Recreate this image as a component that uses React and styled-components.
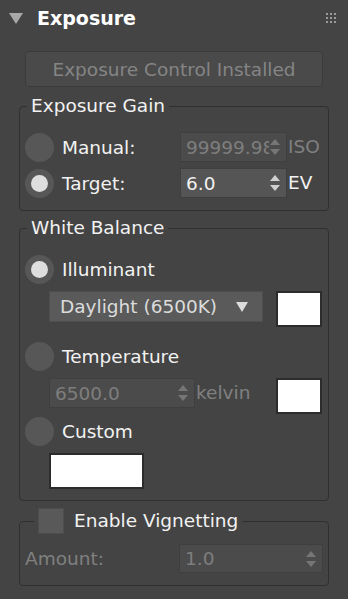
import React from "react";
import styled, { createGlobalStyle } from "styled-components";

const Global = createGlobalStyle`
  html, body { margin: 0; padding: 0; background: #444444; }
  body {
    font-family: "DejaVu Sans", "Liberation Sans", sans-serif;
    font-size: 18.5px;
    color: #f2f2f2;
    width: 348px;
    height: 599px;
    overflow: hidden;
  }
`;

const Panel = styled.div`
  width: 348px;
  height: 599px;
  background: #444444;
`;

const Header = styled.div`
  display: flex;
  align-items: center;
  height: 36px;
  padding: 0 12px 0 9px;
`;

const Caret = styled.span`
  width: 0;
  height: 0;
  border-left: 7px solid transparent;
  border-right: 7px solid transparent;
  border-top: 11px solid #a8a8a8;
  margin-right: 14px;
`;

const Title = styled.span`
  flex: 1;
  font-size: 19px;
  font-weight: 700;
  color: #ffffff;
`;

const Grip = styled.div`
  display: grid;
  grid-template-columns: repeat(3, 2px);
  grid-auto-rows: 2px;
  gap: 2px;
  margin-top: -1px;
  span { background: #9a9a9a; }
`;

const InstallButton = styled.button`
  display: block;
  box-sizing: border-box;
  width: 298px;
  height: 36px;
  margin: 15px 0 0 25px;
  background: #4a4a4a;
  border: 1px solid #3b3b3b;
  border-radius: 4px;
  color: #858585;
  font-family: inherit;
  font-size: 18.5px;
  padding: 0;
`;

const Group = styled.fieldset`
  box-sizing: border-box;
  width: 310px;
  margin: ${p => p.$top}px 0 0 19px;
  padding: ${p => p.$padTop}px 5px ${p => p.$padBottom}px 5px;
  border: 1px solid #303030;
  border-radius: 4px;
`;

const Legend = styled.legend`
  display: flex;
  align-items: center;
  gap: 10px;
  margin-left: ${p => p.$indent}px;
  padding: 0 4px;
  line-height: 22px;
  color: #f2f2f2;
`;

const Check = styled.span`
  box-sizing: border-box;
  width: 26px;
  height: 26px;
  background: #595959;
  border: 1px solid #4d4d4d;
`;

const Row = styled.div`
  display: grid;
  grid-template-columns: 37px 118px 107px auto;
  align-items: center;
  height: 36px;
`;

const RadioRow = styled.div`
  display: flex;
  align-items: center;
  height: 36px;
  margin-top: ${p => p.$top || 0}px;
`;

const Radio = styled.span`
  box-sizing: border-box;
  width: 29px;
  height: 29px;
  border-radius: 50%;
  background: #575757;
  display: flex;
  align-items: center;
  justify-content: center;
  margin-right: 8px;
  &::after {
    content: "";
    width: 17px;
    height: 17px;
    border-radius: 50%;
    background: ${p => (p.$on ? "#dedede" : "transparent")};
  }
`;

const Label = styled.span`
  color: ${p => (p.$dim ? "#808080" : "#f2f2f2")};
`;

const Spin = styled.div`
  box-sizing: border-box;
  display: flex;
  align-items: center;
  width: ${p => p.$w}px;
  height: ${p => p.$h || 30}px;
  background: ${p => (p.$dim ? "#4b4b4b" : "#555555")};
  border: 1px solid #3f3f3f;
  padding: 0 5px 0 5px;
  color: ${p => (p.$dim ? "#7e7e7e" : "#f2f2f2")};
  overflow: hidden;
  white-space: nowrap;
`;

const Value = styled.span`
  flex: 1;
  overflow: hidden;
  text-overflow: clip;
`;

const Arrows = ({ dim }) => (
  <svg width="12" height="18" viewBox="0 0 12 18" style={{ flex: "none" }}>
    <path d="M6 1 L11 7 L1 7 Z" fill={dim ? "#767676" : "#d0d0d0"} />
    <path d="M6 17 L11 11 L1 11 Z" fill={dim ? "#767676" : "#d0d0d0"} />
  </svg>
);

const Unit = styled.span`
  padding-left: 1px;
  line-height: 30px;
  color: ${p => (p.$dim ? "#808080" : "#f2f2f2")};
`;

const Indented = styled.div`
  display: flex;
  align-items: flex-start;
  height: ${p => p.$h}px;
  margin-top: ${p => p.$top || 0}px;
  padding: 0 1px 0 24px;
`;

const Dropdown = styled.div`
  box-sizing: border-box;
  display: flex;
  align-items: center;
  width: 214px;
  height: 31px;
  background: #5a5a5a;
  border: 1px solid #4e4e4e;
  padding: 0 14px 0 10px;
  color: #dcdcdc;
  span { flex: 1; }
`;

const DropArrow = styled.i`
  width: 0;
  height: 0;
  border-left: 6px solid transparent;
  border-right: 6px solid transparent;
  border-top: 10px solid #dcdcdc;
`;

const Swatch = styled.div`
  box-sizing: border-box;
  width: ${p => p.$w}px;
  height: 36px;
  margin-left: ${p => (p.$push ? "auto" : "0")};
  background: #ffffff;
  border: 2px solid #2c2c2c;
`;

const AmountRow = styled.div`
  display: flex;
  align-items: center;
  justify-content: space-between;
  height: 29px;
`;

export default function App() {
  return (
    <Panel>
      <Global />
      <Header>
        <Caret />
        <Title>Exposure</Title>
        <Grip>
          {Array.from({ length: 9 }).map((_, i) => <span key={i} />)}
        </Grip>
      </Header>

      <InstallButton disabled>Exposure Control Installed</InstallButton>

      <Group $top={8} $padTop={12} $padBottom={9}>
        <Legend $indent={2}>Exposure Gain</Legend>
        <Row>
          <Radio />
          <Label>Manual:</Label>
          <Spin $w={107} $dim>
            <Value>99999.98</Value>
            <Arrows dim />
          </Spin>
          <Unit $dim>ISO</Unit>
        </Row>
        <Row>
          <Radio $on />
          <Label>Target:</Label>
          <Spin $w={107}>
            <Value>6.0</Value>
            <Arrows />
          </Spin>
          <Unit>EV</Unit>
        </Row>
      </Group>

      <Group $top={6} $padTop={12} $padBottom={11}>
        <Legend $indent={2}>White Balance</Legend>
        <RadioRow>
          <Radio $on />
          <Label>Illuminant</Label>
        </RadioRow>
        <Indented $h={36} $top={4}>
          <Dropdown>
            <span>Daylight (6500K)</span>
            <DropArrow />
          </Dropdown>
          <Swatch $w={46} $push />
        </Indented>
        <RadioRow $top={11}>
          <Radio />
          <Label>Temperature</Label>
        </RadioRow>
        <Indented $h={36} $top={4}>
          <Spin $w={146} $dim>
            <Value>6500.0</Value>
            <Arrows dim />
          </Spin>
          <Unit $dim>kelvin</Unit>
          <Swatch $w={46} $push />
        </Indented>
        <RadioRow $top={-1}>
          <Radio />
          <Label>Custom</Label>
        </RadioRow>
        <Indented $h={36} $top={4}>
          <Swatch $w={95} />
        </Indented>
      </Group>

      <Group $top={7} $padTop={10} $padBottom={12}>
        <Legend $indent={9}>
          <Check />
          Enable Vignetting
        </Legend>
        <AmountRow>
          <Label $dim>Amount:</Label>
          <Spin $w={144} $h={29} $dim>
            <Value>1.0</Value>
            <Arrows dim />
          </Spin>
        </AmountRow>
      </Group>
    </Panel>
  );
}
